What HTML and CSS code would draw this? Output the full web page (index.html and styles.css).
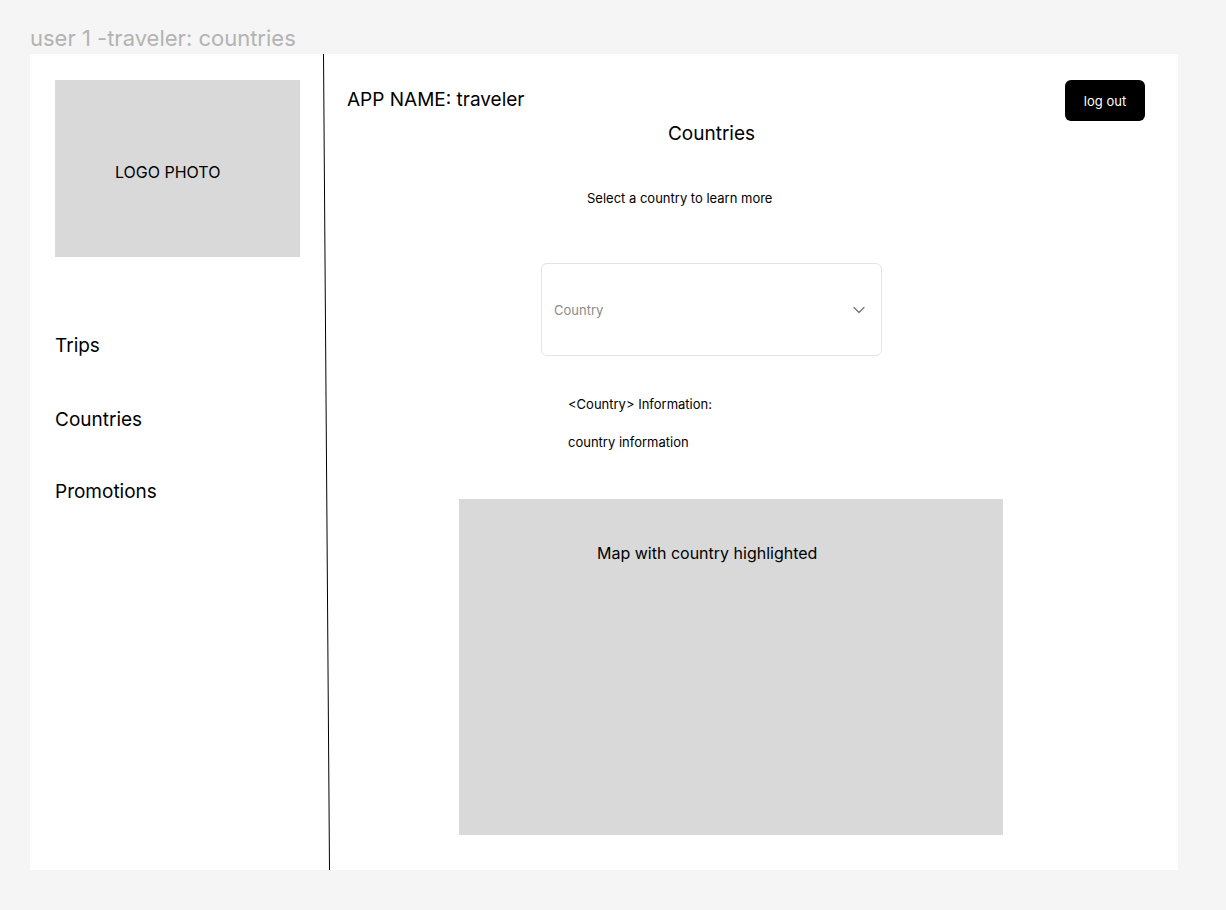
FILE: index.html
```html
<!DOCTYPE html>
<html lang="en">
  <head>
    <meta charset="UTF-8" />
    <meta name="viewport" content="width=device-width, initial-scale=1.0" />
    <title>user 1 -traveler: countries</title>
    <link rel="stylesheet" href="styles.css">
  </head>
  <body>
    <div class="frame-title">user 1 -traveler: countries</div>
    <div class="frame">
      <svg class="divider" width="8" height="816" viewBox="0 0 8 816">
        <line x1="0.5" y1="0" x2="6.5" y2="816" stroke="#000" stroke-width="1" />
      </svg>
      <div class="sidebar">
        <div class="logo">LOGO PHOTO</div>
        <div class="nav">
          <div class="nav-item trips">Trips</div>
          <div class="nav-item countries">Countries</div>
          <div class="nav-item promotions">Promotions</div>
        </div>
      </div>
      <div class="main">
        <div class="header">
          <div class="app-name">APP NAME: traveler</div>
          <div class="logout">log out</div>
        </div>
        <div class="heading">Countries</div>
        <div class="hint">Select a country to learn more</div>
        <div class="select">
          <span class="placeholder">Country</span>
          <svg width="14" height="14" viewBox="0 0 14 14">
            <path d="M2 4.5 L7 9.5 L12 4.5" fill="none" stroke="#757575" stroke-width="1.3" stroke-linecap="round" stroke-linejoin="round" />
          </svg>
        </div>
        <div class="info-title">&lt;Country&gt; Information:</div>
        <div class="info-text">country information</div>
        <div class="map">Map with country highlighted</div>
      </div>
    </div>
  </body>
</html>
```

FILE: styles.css
```css
body {
  margin: 0;
  background-color: #f5f5f5;
  font-family: Inter, "Noto Sans", sans-serif;
  color: #000;
}
.frame-title {
  padding: 25px 0 0 30px;
  height: 29px;
  font-size: 22px;
  line-height: 26px;
  color: #b3b3b3;
}
.frame {
  position: relative;
  display: flex;
  margin-left: 30px;
  width: 1148px;
  height: 816px;
  background-color: #fff;
}
.divider {
  position: absolute;
  left: 293px;
  top: 0;
}
.sidebar {
  width: 268px;
  padding: 26px 0 0 25px;
}
.logo {
  width: 185px;
  height: 95px;
  padding: 82px 0 0 60px;
  background-color: #d9d9d9;
  font-size: 16px;
  line-height: 20px;
}
.nav-item {
  font-size: 19px;
  line-height: 24px;
}
.trips {
  margin-top: 77px;
}
.countries {
  margin-top: 50px;
}
.promotions {
  margin-top: 48px;
}
.main {
  flex: 1;
  display: flex;
  flex-direction: column;
  align-items: flex-start;
  padding: 26px 33px 0 24px;
}
.header {
  align-self: stretch;
  display: flex;
  justify-content: space-between;
  align-items: center;
  height: 41px;
}
.app-name {
  font-size: 19px;
  line-height: 24px;
  margin-top: -1px;
}
.logout {
  width: 80px;
  height: 41px;
  display: flex;
  justify-content: center;
  align-items: center;
  background-color: #000;
  border-radius: 6px;
  color: #fff;
  font-size: 13px;
}
.heading {
  margin: 1px 0 0 194px;
  width: 341px;
  text-align: center;
  font-size: 19px;
  line-height: 24px;
}
.hint {
  margin: 44px 0 0 240px;
  font-size: 13px;
  line-height: 16px;
}
.select {
  box-sizing: border-box;
  margin: 57px 0 0 194px;
  width: 341px;
  height: 93px;
  display: flex;
  justify-content: space-between;
  align-items: center;
  padding: 0 15px 0 12px;
  border: 1px solid #e3e3e3;
  border-radius: 6px;
}
.placeholder {
  font-size: 13px;
  color: #8a8a8a;
}
.info-title {
  margin: 40px 0 0 221px;
  font-size: 13px;
  line-height: 16px;
}
.info-text {
  margin: 22px 0 0 221px;
  font-size: 13px;
  line-height: 16px;
}
.map {
  box-sizing: border-box;
  margin: 49px 0 0 112px;
  width: 544px;
  height: 336px;
  padding: 44px 0 0 138px;
  background-color: #d9d9d9;
  font-size: 16px;
  line-height: 20px;
}
```
